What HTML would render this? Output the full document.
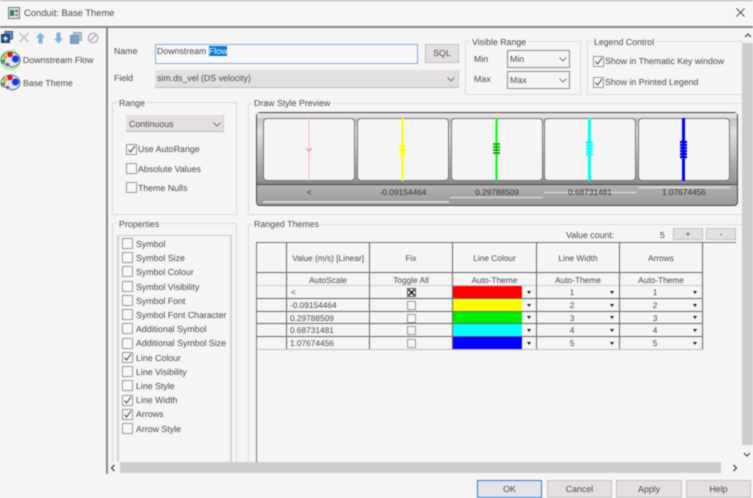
<!DOCTYPE html>
<html><head><meta charset="utf-8">
<style>
html,body{margin:0;padding:0}
body{width:753px;height:498px;overflow:hidden;background:#f5f5f5;position:relative;font-family:"Liberation Sans",sans-serif;font-size:8.8px;color:#4a4a4a;text-rendering:geometricPrecision}
#r{position:absolute;left:0;top:0;width:753px;height:498px;filter:blur(.4px)}
#r div,#r svg{position:absolute;box-sizing:border-box}
.t{white-space:nowrap;line-height:12px}
.c{white-space:nowrap;line-height:12px;text-align:center}
.m{font-size:8.3px}
.g{border:1px solid #dcdcdc}
.l{background:#f5f5f5;padding:0 2px;white-space:nowrap;line-height:14px}
.b{background:#e3dfe3;border:1px solid #c4c2c4;text-align:center;line-height:16px}
.s{background:#e3dfe3;border-bottom:1px solid #bbb;border-right:1px solid #ccc}
.cb{width:11px;height:11px;border:1px solid #999;background:#f7f7f7}
.cb svg{left:0;top:0}
.h{background:#666;height:1px}
.v{background:#666;width:1px}
.ar{width:0;height:0;border-left:2.5px solid transparent;border-right:2.5px solid transparent;border-top:3px solid #222}
.cell{background:#f5f5f5;border:1px solid #777;border-radius:4px;top:118px;height:63px}
</style></head><body><div id="r">

<!-- title bar -->
<div style="left:0;top:0;width:753px;height:28px;background:#f6f6f6;border-bottom:2px solid #8a8a8a"></div>
<div style="left:0;top:0;width:753px;height:1px;background:#aaa"></div>
<svg style="left:8px;top:7px" width="12" height="12"><rect x=".5" y=".5" width="11" height="11" fill="#dfe8e4" stroke="#777"/><rect x="2" y="3" width="4" height="6" fill="#2c7a6a"/><rect x="7" y="3" width="3" height="2" fill="#667"/><rect x="7" y="7" width="3" height="2" fill="#889"/></svg>
<div class="t" style="left:24px;top:7px;font-size:9.4px">Conduit: Base Theme</div>
<svg style="left:735px;top:7px" width="11" height="11"><path d="M1.5 1.5L9.5 9.5M9.5 1.5L1.5 9.5" stroke="#555" stroke-width="1.1"/></svg>

<!-- toolbar -->
<svg style="left:1px;top:31px" width="12" height="12"><rect x="4" y="0.5" width="7.5" height="7.5" fill="#6b93bd" stroke="#36587c"/><rect x="0.5" y="3.5" width="8" height="8" fill="#1d4f83" stroke="#173c62"/><path d="M4.5 5v5M2 7.5h5" stroke="#fff" stroke-width="1.2"/></svg>
<svg style="left:18px;top:32px" width="12" height="11"><path d="M1.5 1L10.5 10M10.5 1L1.5 10" stroke="#c9b8bc" stroke-width="1.5"/></svg>
<svg style="left:35px;top:32px" width="11" height="12"><path d="M5.5 .5L10 5.5H7.5V11.5H3.5V5.5H1Z" fill="#84b1d8"/></svg>
<svg style="left:53px;top:32px" width="11" height="12"><path d="M5.5 11.5L10 6.5H7.5V.5H3.5V6.5H1Z" fill="#84b1d8"/></svg>
<svg style="left:70px;top:32px" width="12" height="12"><rect x="3.5" y=".5" width="8" height="8" fill="#b5c7da" stroke="#92a9c2"/><rect x=".5" y="3.5" width="8" height="8" fill="#7da3c8" stroke="#6a90b6"/></svg>
<svg style="left:87px;top:32px" width="12" height="12"><circle cx="6" cy="6" r="4.7" fill="none" stroke="#c4b4bc" stroke-width="1.6"/><path d="M2.8 9.2L9.2 2.8" stroke="#c4b4bc" stroke-width="1.6"/></svg>

<!-- tree -->
<svg style="left:0;top:49px" width="21" height="22"><circle cx="10.500" cy="11" r="10.500" fill="#b9edb5"/><path d="M1 11C1 6 6 3 11 3C16 3 20 7 20 11C20 15 16 18 11 18C9 18 10 15 7 15C4 15 1 15 1 11Z" fill="#dfe6ea" stroke="#556" stroke-width=".8"/><circle cx="10" cy="5.500" r="2.800" fill="#e21818"/><circle cx="15.500" cy="10" r="3.600" fill="#1b3be0"/><circle cx="5" cy="8" r="2" fill="#e0b020"/><circle cx="3.500" cy="12" r="1.800" fill="#30a030"/><circle cx="7.500" cy="15.500" r="1.600" fill="#a030c0"/></svg>
<svg style="left:0;top:74px" width="21" height="20"><path d="M1 9C1 4 6 1 11 1C16 1 20 5 20 9C20 13 16 16 11 16C9 16 10 13 7 13C4 13 1 13 1 9Z" fill="#dfe6ea" stroke="#556" stroke-width=".8"/><circle cx="10" cy="3.500" r="2.800" fill="#e21818"/><circle cx="15.500" cy="8" r="3.600" fill="#1b3be0"/><circle cx="5" cy="6" r="2" fill="#e0b020"/><circle cx="3.500" cy="10" r="1.800" fill="#30a030"/><circle cx="7.500" cy="13.500" r="1.600" fill="#a030c0"/></svg>
<div class="t" style="left:23px;top:54px">Downstream Flow</div>
<div class="t" style="left:23px;top:77px">Base Theme</div>

<!-- divider -->
<div style="left:106px;top:28px;width:2px;height:446px;background:#8a8a8a"></div>

<!-- name/field -->
<div class="t" style="left:114px;top:45px">Name</div>
<div class="t" style="left:114px;top:72px">Field</div>
<div style="left:155px;top:44px;width:263px;height:20px;background:#f8f8f8;border:1px solid #86a9d8"></div>
<div class="t" style="left:157px;top:45px">Downstream <span style="background:#0078d7;color:#fff">Flow</span></div>
<div class="b" style="left:425px;top:44px;width:34px;height:19px">SQL</div>
<div class="s" style="left:155px;top:70px;width:304px;height:18px"></div>
<div class="t" style="left:157px;top:72px">sim.ds_vel (DS velocity)</div>
<svg style="left:447px;top:77px" width="8" height="5"><path d="M.5 .5L4 4L7.5 .5" fill="none" stroke="#777"/></svg>

<!-- Visible range -->
<div class="g" style="left:465px;top:41px;width:116px;height:54px"></div>
<div class="l" style="left:470px;top:35px">Visible Range</div>
<div class="t" style="left:474px;top:53px">Min</div>
<div class="t" style="left:474px;top:73px">Max</div>
<div style="left:507px;top:50px;width:63px;height:18px;border:1px solid #8a8a8a;background:#f5f5f5"></div>
<div style="left:507px;top:71px;width:63px;height:18px;border:1px solid #8a8a8a;background:#f5f5f5"></div>
<div class="t" style="left:510px;top:53px">Min</div>
<div class="t" style="left:510px;top:74px">Max</div>
<svg style="left:559px;top:57px" width="8" height="5"><path d="M.5 .5L4 4L7.5 .5" fill="none" stroke="#777"/></svg>
<svg style="left:559px;top:78px" width="8" height="5"><path d="M.5 .5L4 4L7.5 .5" fill="none" stroke="#777"/></svg>

<!-- Legend control -->
<div class="g" style="left:587px;top:41px;width:156px;height:54px;border-right:none"></div>
<div class="l" style="left:592px;top:35px">Legend Control</div>
<div class="cb" style="left:593px;top:56px"><svg width="9" height="9"><path d="M1.5 4.5L3.5 7L8 1" fill="none" stroke="#444"/></svg></div>
<div class="t" style="left:605px;top:55px">Show in Thematic Key window</div>
<div class="cb" style="left:593px;top:77px"><svg width="9" height="9"><path d="M1.5 4.5L3.5 7L8 1" fill="none" stroke="#444"/></svg></div>
<div class="t" style="left:605px;top:76px">Show in Printed Legend</div>

<!-- Range -->
<div class="g" style="left:112px;top:102px;width:125px;height:113px"></div>
<div class="l" style="left:117px;top:96px">Range</div>
<div class="s" style="left:126px;top:115px;width:98px;height:17px"></div>
<div class="t" style="left:129px;top:118px">Continuous</div>
<svg style="left:213px;top:122px" width="8" height="5"><path d="M.5 .5L4 4L7.5 .5" fill="none" stroke="#777"/></svg>
<div class="cb" style="left:126px;top:144px"><svg width="9" height="9"><path d="M1.5 4.5L3.5 7L8 1" fill="none" stroke="#444"/></svg></div>
<div class="t" style="left:138px;top:143px">Use AutoRange</div>
<div class="cb" style="left:126px;top:163px"></div>
<div class="t" style="left:138px;top:163px">Absolute Values</div>
<div class="cb" style="left:126px;top:182px"></div>
<div class="t" style="left:138px;top:182px">Theme Nulls</div>

<!-- Properties -->
<div class="g" style="left:112px;top:223px;width:125px;height:239px;border-bottom:none"></div>
<div class="l" style="left:117px;top:217px">Properties</div>
<div style="left:117px;top:235px;width:115px;height:227px;border:1px solid #ccc;border-bottom:none;border-left:2px solid #d4d4d4;border-right:2px solid #d4d4d4"></div>
<div class="cb" style="left:122px;top:238px"></div><div class="t" style="left:136px;top:238px">Symbol</div>
<div class="cb" style="left:122px;top:252px"></div><div class="t" style="left:136px;top:252px">Symbol Size</div>
<div class="cb" style="left:122px;top:266px"></div><div class="t" style="left:136px;top:266px">Symbol Colour</div>
<div class="cb" style="left:122px;top:281px"></div><div class="t" style="left:136px;top:281px">Symbol Visibility</div>
<div class="cb" style="left:122px;top:295px"></div><div class="t" style="left:136px;top:295px">Symbol Font</div>
<div class="cb" style="left:122px;top:309px"></div><div class="t" style="left:136px;top:309px">Symbol Font Character</div>
<div class="cb" style="left:122px;top:323px"></div><div class="t" style="left:136px;top:323px">Additional Symbol</div>
<div class="cb" style="left:122px;top:338px"></div><div class="t" style="left:136px;top:337px">Additional Symbol Size</div>
<div class="cb" style="left:122px;top:352px"><svg width="9" height="9"><path d="M1.5 4.5L3.5 7L8 1" fill="none" stroke="#444"/></svg></div><div class="t" style="left:136px;top:352px">Line Colour</div>
<div class="cb" style="left:122px;top:366px"></div><div class="t" style="left:136px;top:366px">Line Visibility</div>
<div class="cb" style="left:122px;top:380px"></div><div class="t" style="left:136px;top:380px">Line Style</div>
<div class="cb" style="left:122px;top:395px"><svg width="9" height="9"><path d="M1.5 4.5L3.5 7L8 1" fill="none" stroke="#444"/></svg></div><div class="t" style="left:136px;top:394px">Line Width</div>
<div class="cb" style="left:122px;top:409px"><svg width="9" height="9"><path d="M1.5 4.5L3.5 7L8 1" fill="none" stroke="#444"/></svg></div><div class="t" style="left:136px;top:408px">Arrows</div>
<div class="cb" style="left:122px;top:423px"></div><div class="t" style="left:136px;top:423px">Arrow Style</div>

<!-- Draw style preview -->
<div class="g" style="left:248px;top:103px;width:494px;height:112px;border-right:none"></div>
<div class="l" style="left:252px;top:96px">Draw Style Preview</div>
<div style="left:256px;top:112px;width:482px;height:94px;border:1px solid #444;border-radius:4px;background:linear-gradient(#b5b3b5,#e3dfe3 20%,#9a9a9a 70%,#888);overflow:hidden"></div>
<div style="left:257px;top:113px;width:480px;height:5px;background:#e3dfe3"></div>
<div style="left:257px;top:181px;width:480px;height:4px;background:#8a8a8a"></div>
<div style="left:257px;top:184px;width:480px;height:1px;background:#444"></div>
<div style="left:257px;top:185px;width:480px;height:20px;background:linear-gradient(#b2b2b2,#9a9a9a);border-radius:0 0 3px 3px"></div>
<div class="cell" style="left:263px;width:92px"></div>
<div class="cell" style="left:357px;width:92px"></div>
<div class="cell" style="left:451px;width:92px"></div>
<div class="cell" style="left:544px;width:92px"></div>
<div class="cell" style="left:638px;width:92px"></div>
<svg style="left:263px;top:118px" width="470" height="63">
<path d="M46 0V63" stroke="#ffb5b5" stroke-width="1"/><path d="M43 30L46 33L49 30" fill="none" stroke="#f66" stroke-width=".8"/>
<path d="M139.500 0V63" stroke="#ff0" stroke-width="2"/><path d="M136.500 27L142.500 33M142.500 27L136.500 33M136.500 31L142.500 37M142.500 31L136.500 37" stroke="#ff0" stroke-width="1.500"/>
<path d="M233.500 0V63" stroke="#0f0" stroke-width="2"/><path d="M230 26h7M230 29h7M230 32h7M230 35h7" stroke="#0a0" stroke-width="1.800"/>
<path d="M326.500 0V63" stroke="#0ff" stroke-width="3"/><path d="M323 24.500h7M323 27.500h7M323 30.500h7M323 33.500h7M323 36.500h7" stroke="#0ff" stroke-width="2"/>
<path d="M420.500 0V63" stroke="#00f" stroke-width="3"/><path d="M417 24h7M417 27h7M417 30h7M417 33h7M417 36h7M417 39h7" stroke="#00d" stroke-width="2.200"/>
</svg>
<div style="left:263px;top:201px;width:186px;height:2px;background:#d8d0dc"></div>
<div style="left:450px;top:197px;width:93px;height:1px;background:#e8e8e8"></div>
<div style="left:544px;top:192px;width:92px;height:1px;background:#e8e8e8"></div>
<div style="left:638px;top:187px;width:92px;height:1px;background:#f0f0f0"></div>
<div class="c m" style="left:263px;top:186px;width:92px;color:#333">&lt;</div>
<div class="c m" style="left:357px;top:186px;width:92px;color:#333">-0.09154464</div>
<div class="c m" style="left:451px;top:186px;width:92px;color:#333">0.29788509</div>
<div class="c m" style="left:544px;top:186px;width:92px;color:#333">0.68731481</div>
<div class="c m" style="left:638px;top:186px;width:92px;color:#333">1.07674456</div>

<!-- Ranged themes -->
<div style="left:248px;top:224px;width:494px;height:1px;background:#dcdcdc"></div>
<div style="left:248px;top:224px;width:1px;height:238px;background:#dcdcdc"></div>
<div class="l" style="left:252px;top:217px">Ranged Themes</div>
<div class="t" style="left:566px;top:229px">Value count:</div>
<div class="t" style="left:660px;top:229px">5</div>
<div class="b" style="left:673px;top:228px;width:30px;height:12px;line-height:10px">+</div>
<div class="b" style="left:706px;top:228px;width:30px;height:12px;line-height:10px">-</div>

<div class="h" style="left:256px;top:242px;width:480px;background:#777"></div>
<div class="h" style="left:256px;top:272px;width:447px"></div>
<div style="left:257px;top:285px;width:445px;height:1px;background:#cfc8d0"></div>
<div class="h" style="left:256px;top:298px;width:447px"></div>
<div class="h" style="left:256px;top:311px;width:447px"></div>
<div class="h" style="left:256px;top:323px;width:447px"></div>
<div class="h" style="left:256px;top:336px;width:447px"></div>
<div style="left:257px;top:349px;width:446px;height:1px;background:#bbb"></div>
<div class="v" style="left:256px;top:242px;height:220px;background:#777"></div>
<div class="v" style="left:286px;top:242px;height:107px"></div>
<div class="v" style="left:369px;top:242px;height:107px"></div>
<div class="v" style="left:452px;top:242px;height:107px"></div>
<div class="v" style="left:536px;top:242px;height:107px"></div>
<div class="v" style="left:619px;top:242px;height:107px"></div>
<div class="v" style="left:702px;top:242px;height:107px"></div>

<div class="c m" style="left:287px;top:252px;width:82px">Value (m/s) [Linear]</div>
<div class="c m" style="left:370px;top:252px;width:82px">Fix</div>
<div class="c m" style="left:453px;top:252px;width:83px">Line Colour</div>
<div class="c m" style="left:537px;top:252px;width:82px">Line Width</div>
<div class="c m" style="left:620px;top:252px;width:82px">Arrows</div>
<div class="c m" style="left:287px;top:274px;width:82px">AutoScale</div>
<div class="c m" style="left:370px;top:274px;width:82px">Toggle All</div>
<div class="c m" style="left:453px;top:274px;width:83px">Auto-Theme</div>
<div class="c m" style="left:537px;top:274px;width:82px">Auto-Theme</div>
<div class="c m" style="left:620px;top:274px;width:82px">Auto-Theme</div>

<div class="t m" style="left:291px;top:286px">&lt;</div>
<div class="t m" style="left:290px;top:299px">-0.09154464</div>
<div class="t m" style="left:290px;top:312px">0.29788509</div>
<div class="t m" style="left:290px;top:324px">0.68731481</div>
<div class="t m" style="left:290px;top:337px">1.07674456</div>

<div class="cb" style="left:407px;top:288px;width:9px;height:9px;border-color:#555"><svg width="7" height="7"><path d="M.5 .5L6.500 6.500M6.500 .5L.5 6.500" stroke="#111" stroke-width="1.400"/></svg></div>
<div class="cb" style="left:407px;top:301px;width:9px;height:9px"></div>
<div class="cb" style="left:407px;top:314px;width:9px;height:9px"></div>
<div class="cb" style="left:407px;top:326px;width:9px;height:9px"></div>
<div class="cb" style="left:407px;top:339px;width:9px;height:9px"></div>

<div style="left:453px;top:286px;width:69px;height:12px;background:#f00"></div>
<div style="left:453px;top:299px;width:69px;height:12px;background:#ff0"></div>
<div style="left:453px;top:312px;width:69px;height:11px;background:#0e0"></div>
<div style="left:453px;top:324px;width:69px;height:12px;background:#0ff"></div>
<div style="left:453px;top:337px;width:69px;height:12px;background:#00f"></div>

<div class="ar" style="left:527px;top:291px"></div><div class="ar" style="left:527px;top:304px"></div><div class="ar" style="left:527px;top:316px"></div><div class="ar" style="left:527px;top:329px"></div><div class="ar" style="left:527px;top:342px"></div>
<div class="ar" style="left:610px;top:291px"></div><div class="ar" style="left:610px;top:304px"></div><div class="ar" style="left:610px;top:316px"></div><div class="ar" style="left:610px;top:329px"></div><div class="ar" style="left:610px;top:342px"></div>
<div class="ar" style="left:693px;top:291px"></div><div class="ar" style="left:693px;top:304px"></div><div class="ar" style="left:693px;top:316px"></div><div class="ar" style="left:693px;top:329px"></div><div class="ar" style="left:693px;top:342px"></div>

<div class="c m" style="left:537px;top:286px;width:70px">1</div>
<div class="c m" style="left:537px;top:299px;width:70px">2</div>
<div class="c m" style="left:537px;top:312px;width:70px">3</div>
<div class="c m" style="left:537px;top:324px;width:70px">4</div>
<div class="c m" style="left:537px;top:337px;width:70px">5</div>
<div class="c m" style="left:620px;top:286px;width:70px">1</div>
<div class="c m" style="left:620px;top:299px;width:70px">2</div>
<div class="c m" style="left:620px;top:312px;width:70px">3</div>
<div class="c m" style="left:620px;top:324px;width:70px">4</div>
<div class="c m" style="left:620px;top:337px;width:70px">5</div>

<!-- scrollbars -->
<div style="left:742px;top:43px;width:11px;height:402px;background:#cdcdcd"></div>
<svg style="left:744px;top:33px" width="8" height="5"><path d="M1 4L4 1L7 4" fill="none" stroke="#444" stroke-width="1.200"/></svg>
<svg style="left:743px;top:452px" width="8" height="5"><path d="M1 1L4 4L7 1" fill="none" stroke="#444" stroke-width="1.200"/></svg>
<div style="left:120px;top:462px;width:601px;height:11px;background:#cdcdcd"></div>
<svg style="left:110px;top:464px" width="6" height="8"><path d="M4.500 1L1.500 4L4.500 7" fill="none" stroke="#333" stroke-width="1.200"/></svg>
<svg style="left:732px;top:464px" width="6" height="8"><path d="M1.500 1L4.500 4L1.500 7" fill="none" stroke="#333" stroke-width="1.200"/></svg>

<!-- bottom buttons -->
<div class="b" style="left:477px;top:480px;width:65px;height:18px;background:#e3e3e8;border-color:#2a7ad0">OK</div>
<div class="b" style="left:547px;top:480px;width:65px;height:18px">Cancel</div>
<div class="b" style="left:616px;top:480px;width:66px;height:18px">Apply</div>
<div class="b" style="left:686px;top:480px;width:65px;height:18px">Help</div>

</div></body></html>
